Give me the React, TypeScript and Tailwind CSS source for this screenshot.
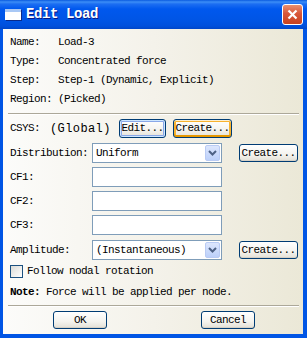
import React from "react";

type BtnProps = { label: string; className: string; state?: "focus" | "hover" };

const XpButton = ({ label, className, state }: BtnProps) => {
  const ring =
    state === "focus"
      ? "shadow-[inset_0_0_0_1px_#CEE7FF,inset_0_0_0_2px_#8AA8E8]"
      : state === "hover"
      ? "shadow-[inset_0_1px_0_#FFF0CF,inset_0_-2px_0_#E59700,inset_0_0_0_2px_#F8B330]"
      : "shadow-[inset_0_-1px_0_#D6D0C5]";
  return (
    <div
      className={`${className} ${ring} flex items-center justify-center rounded-[3px] border border-[#003C74] bg-[linear-gradient(180deg,#FFFFFF_0%,#F4F3EE_60%,#E3E0D6_100%)] text-black`}
    >
      {label}
    </div>
  );
};

const Combo = ({ value }: { value: string }) => (
  <div className="flex h-[20px] w-[130px] items-center border border-[#7F9DB9] bg-white">
    <span className="flex-1 pl-[3px]">{value}</span>
    <div className="mr-[1px] flex h-[16px] w-[15px] items-center justify-center rounded-[2px] border border-[#B9CBF4] bg-[linear-gradient(180deg,#DCE6FD,#BCD0FA)]">
      <svg width="9" height="6" viewBox="0 0 9 6">
        <path d="M1 1 L4.5 4.5 L8 1" stroke="#4D6185" strokeWidth="2" fill="none" />
      </svg>
    </div>
  </div>
);

const TextBox = () => <div className="h-[20px] w-[130px] border border-[#7F9DB9] bg-white" />;

const Separator = () => (
  <div className="-ml-[2px] h-[2px] w-[291px] border-t border-b border-t-[#ACA899] border-b-white" />
);

export default function App() {
  const info = [
    ["Name:", "Load-3"],
    ["Type:", "Concentrated force"],
    ["Step:", "Step-1 (Dynamic, Explicit)"],
    ["Region:", "(Picked)"],
  ];

  return (
    <div className="flex h-[338px] w-[307px] flex-col bg-[#0055E5]">
      {/* title bar */}
      <div className="flex h-[29px] items-center bg-[linear-gradient(180deg,#0A5BE0_0px,#3C8EF7_2px,#1C6EF2_4px,#0058EE_9px,#0055E5_20px,#0050DC_26px,#0046C8_29px)]">
        <div className="ml-[5px] h-[11px] w-[16px] border-t-[3px] border-t-[#A9C8F5] bg-white shadow-[1px_1px_0_#0A2A8A]" />
        <span className="ml-[5px] font-['Liberation_Mono',monospace] text-[14px] font-bold tracking-[-0.4px] text-white [text-shadow:1px_1px_0_#0A1883]">
          Edit Load
        </span>
        <div className="ml-auto mr-[4px] flex h-[21px] w-[21px] items-center justify-center rounded-[3px] border border-white bg-[linear-gradient(180deg,#E9906F_0%,#D8573A_45%,#C8421F_100%)]">
          <svg width="11" height="11" viewBox="0 0 11 11">
            <path d="M1.5 1.5 L9.5 9.5 M9.5 1.5 L1.5 9.5" stroke="white" strokeWidth="2.2" />
          </svg>
        </div>
      </div>

      {/* client */}
      <div className="mb-[4px] ml-[3px] mr-[4px] flex flex-1 flex-col bg-[linear-gradient(90deg,#FCFCFA_0%,#F4F2EA_50%,#EBE8D7_100%)] pl-[7px] pt-[4px] font-['Liberation_Mono',monospace] text-[11px] tracking-[-0.6px] text-black">
        {info.map(([k, v]) => (
          <div key={k} className="flex h-[19px] items-center">
            <span className="w-[48px]">{k}</span>
            <span>{v}</span>
          </div>
        ))}

        <div className="mt-[4px]">
          <Separator />
        </div>

        <div className="mt-[4px] flex h-[19px] items-center">
          <span className="w-[40px]">CSYS:</span>
          <span className="w-[69px] text-[12px] tracking-[0.4px]">(Global)</span>
          <XpButton label="Edit..." className="h-[19px] w-[47px]" state="focus" />
          <XpButton label="Create..." className="ml-[7px] h-[19px] w-[59px]" state="hover" />
        </div>

        <div className="mt-[5px] flex h-[20px] items-center">
          <span className="w-[82px]">Distribution:</span>
          <Combo value="Uniform" />
          <XpButton label="Create..." className="ml-[17px] h-[18px] w-[59px]" />
        </div>

        {["CF1:", "CF2:", "CF3:"].map((k) => (
          <div key={k} className="mt-[4px] flex h-[20px] items-center">
            <span className="w-[82px]">{k}</span>
            <TextBox />
          </div>
        ))}

        <div className="mt-[5px] flex h-[20px] items-center">
          <span className="w-[82px]">Amplitude:</span>
          <Combo value="(Instantaneous)" />
          <XpButton label="Create..." className="ml-[17px] h-[18px] w-[59px]" />
        </div>

        <div className="mt-[5px] flex h-[13px] items-center">
          <div className="h-[13px] w-[13px] border border-[#1C5180] bg-[linear-gradient(135deg,#DCDCD7,#FFFFFF)]" />
          <span className="ml-[4px]">Follow nodal rotation</span>
        </div>

        <div className="mt-[7px] flex h-[14px] items-center">
          <span className="font-bold">Note:</span>
          <span className="ml-[6px]">Force will be applied per node.</span>
        </div>

        <div className="mt-[6px]">
          <Separator />
        </div>

        <div className="mt-[4px] flex h-[18px] items-center pl-[43px]">
          <XpButton label="OK" className="h-[18px] w-[54px]" />
          <XpButton label="Cancel" className="ml-[94px] h-[18px] w-[54px]" />
        </div>
      </div>
    </div>
  );
}
